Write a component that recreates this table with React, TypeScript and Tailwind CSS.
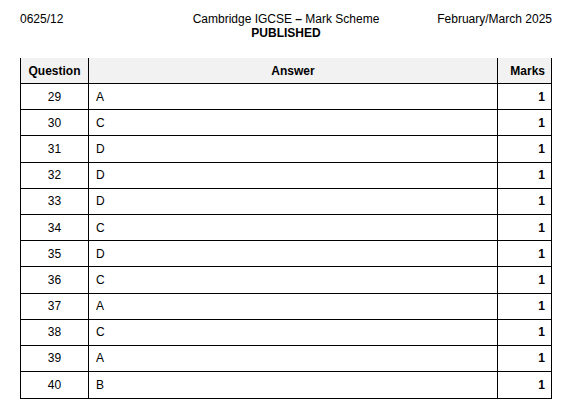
const rows: [number, string][] = [
  [29, "A"],
  [30, "C"],
  [31, "D"],
  [32, "D"],
  [33, "D"],
  [34, "C"],
  [35, "D"],
  [36, "C"],
  [37, "A"],
  [38, "C"],
  [39, "A"],
  [40, "B"],
];

const App = () => {
  return (
    <div className="w-[575px] h-[411px] bg-white text-black font-['Liberation_Sans',Arial,sans-serif] text-[12px] leading-[14px] pl-[20px] pr-[23px] pt-[12px]">
      {/* Page header */}
      <div className="grid grid-cols-[1fr_auto_1fr] items-start">
        <span>0625/12</span>
        <div className="flex flex-col items-center">
          <span>
            Cambridge IGCSE <span className="font-bold">–</span> Mark Scheme
          </span>
          <span className="font-bold">PUBLISHED</span>
        </div>
        <span className="text-right">February/March 2025</span>
      </div>

      {/* Mark table */}
      <div className="mt-[18px] border-x border-b border-black">
        <div className="grid grid-cols-[68px_1fr_53px] h-[26px] bg-[#f2f2f2] font-bold border-b border-black">
          <div className="flex items-center justify-center border-r border-black">Question</div>
          <div className="flex items-center justify-center border-r border-black">Answer</div>
          <div className="flex items-center justify-end pr-[6px]">Marks</div>
        </div>
        {rows.map(([q, a], i) => (
          <div
            key={q}
            className={`grid grid-cols-[68px_1fr_53px] h-[26.2px] ${i < rows.length - 1 ? "border-b border-black" : ""}`}
          >
            <div className="flex items-center justify-center border-r border-black">{q}</div>
            <div className="flex items-center pl-[7px] border-r border-black">{a}</div>
            <div className="flex items-center justify-end pr-[6px] font-bold">1</div>
          </div>
        ))}
      </div>
    </div>
  );
};

export default App;
